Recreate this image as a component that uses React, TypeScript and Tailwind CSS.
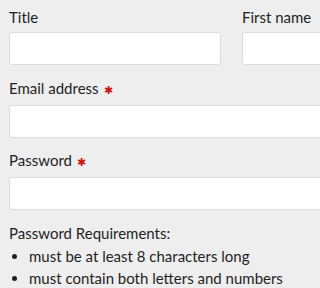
import React from 'react';

const Label: React.FC<{ text: string; required?: boolean }> = ({ text, required }) => (
  <label className="block text-[15px] leading-[22px] text-[#1f1f1f]">
    {text}
    {required && <span className="ml-[5px] text-[#cc1111] text-[11px]">✱</span>}
  </label>
);

const Input: React.FC = () => (
  <input
    type="text"
    className="mt-[4px] block w-full h-[33px] bg-white border border-[#dcdcdc] rounded-[3px] outline-none"
  />
);

const App: React.FC = () => {
  return (
    <div className="w-screen h-screen overflow-hidden bg-[#eeeeee]">
      <div
        className="w-[520px] px-[9px] pt-[6px]"
        style={{ fontFamily: 'Lato, "Noto Sans", sans-serif' }}
      >
        <div className="grid grid-cols-[212px_212px] gap-x-[21px]">
          <div>
            <Label text="Title" />
            <Input />
          </div>
          <div>
            <Label text="First name" />
            <Input />
          </div>
        </div>

        <div className="mt-[12px]">
          <Label text="Email address" required />
          <Input />
        </div>

        <div className="mt-[11px]">
          <Label text="Password" required />
          <Input />
        </div>

        <div className="mt-[12px] text-[15px] leading-[22px] text-[#1f1f1f]">
          <p>Password Requirements:</p>
          <ul className="list-disc pl-[20px] mt-[1px]">
            <li>must be at least 8 characters long</li>
            <li>must contain both letters and numbers</li>
          </ul>
        </div>
      </div>
    </div>
  );
};

export default App;
